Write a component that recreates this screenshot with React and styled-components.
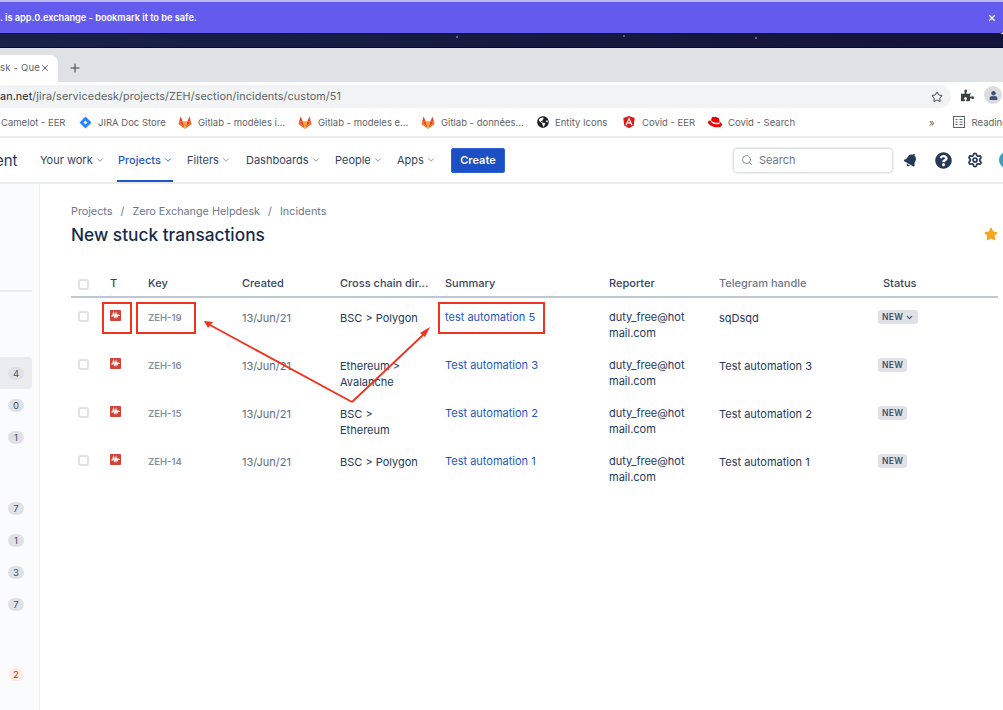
import React from 'react';
import styled, { createGlobalStyle } from 'styled-components';
import { FaBell, FaQuestionCircle, FaStar, FaPuzzlePiece, FaUser, FaGlobeAmericas, FaAngular, FaRedhat } from 'react-icons/fa';
import { ChevronDown, Search, Settings, Star, X, Plus } from 'lucide-react';

const GlobalStyle = createGlobalStyle`
  html, body {
    margin: 0;
    height: 710px;
    overflow: hidden;
    background: #fff;
  }
  body {
    font-family: Inter, "Noto Sans", sans-serif;
  }
`;

const Page = styled.div`
  position: relative;
  width: 1003px;
  height: 710px;
  overflow: hidden;
  display: flex;
  flex-direction: column;
`;

const Banner = styled.div`
  height: 34px;
  box-sizing: border-box;
  background: #635bee;
  border-top: 2px solid #bdb9f6;
  border-bottom: 1px solid #14152e;
  border-radius: 0 0 4px 0;
  display: flex;
  align-items: center;
  justify-content: space-between;
  padding: 0 6px 0 0;
  color: #fff;
  font-size: 9.2px;
  font-weight: 600;
`;

const Night = styled.div`
  position: relative;
  height: 14px;
  box-sizing: border-box;
  background: linear-gradient(90deg, #1a2149, #12133a);
  border-bottom: 1px solid #0b0b14;
`;

const StarDot = styled.i`
  position: absolute;
  top: ${(p) => p.$top}px;
  left: ${(p) => p.$left}px;
  width: 2px;
  height: 2px;
  background: #5d6379;
`;

const TabStrip = styled.div`
  height: 34px;
  box-sizing: border-box;
  background: #dee1e6;
  display: flex;
  align-items: flex-end;
  gap: 10px;
`;

const Tab = styled.div`
  width: 58px;
  height: 27px;
  background: #fff;
  border-radius: 0 8px 0 0;
  display: flex;
  align-items: center;
  justify-content: space-between;
  padding: 0 9px 2px 0;
  box-sizing: border-box;
  font-size: 9.5px;
  letter-spacing: 0.2px;
  color: #5f6368;
  white-space: nowrap;
  overflow: hidden;

  svg {
    flex: none;
  }
`;

const NewTab = styled.div`
  height: 27px;
  display: flex;
  align-items: center;
  color: #3c4043;
  padding-bottom: 2px;
  box-sizing: border-box;
`;

const AddressRow = styled.div`
  height: 26px;
  background: #fff;
  display: flex;
  align-items: flex-end;
`;

const AddressField = styled.div`
  width: 951px;
  height: 23px;
  background: #f1f3f4;
  border-radius: 0 12px 12px 0;
  display: flex;
  align-items: center;
  justify-content: space-between;
  padding-right: 8px;
  box-sizing: border-box;
  font-size: 10.8px;
  letter-spacing: 0.1px;
  color: #5f6368;
  white-space: nowrap;

  b {
    font-weight: 400;
    color: #202124;
  }
`;

const Puzzle = styled.span`
  display: flex;
  align-self: center;
  margin-left: 10px;
  color: #3c4043;
`;

const ProfileDot = styled.span`
  width: 18px;
  height: 18px;
  border-radius: 50%;
  background: #dadce0;
  align-self: center;
  margin-left: 10px;
  display: flex;
  align-items: center;
  justify-content: center;
  color: #3f5273;
`;

const Bookmarks = styled.div`
  height: 28px;
  box-sizing: border-box;
  background: #fff;
  display: flex;
  align-items: center;
  padding-left: 1px;
  font-size: 9.5px;
  color: #5f6368;
  white-space: nowrap;
`;

const Bookmark = styled.span`
  display: flex;
  align-items: center;
  gap: 6px;
  flex: none;
  width: ${(p) => p.$width}px;
`;

const BookmarkEnd = styled.span`
  display: flex;
  align-items: center;
  gap: 7px;
  flex: none;
`;

const BookmarkSep = styled.span`
  width: 1px;
  height: 14px;
  background: #dadce0;
  margin: 0 9px 0 9px;
`;

const TopNav = styled.header`
  height: 48px;
  box-sizing: border-box;
  border-top: 2px solid #ececf0;
  border-bottom: 2px solid #ebecf0;
  background: #fff;
  display: flex;
  align-items: stretch;
  font-size: 11px;
  color: #344563;
  white-space: nowrap;
`;

const ProductName = styled.div`
  width: 40px;
  font-size: 15px;
  text-indent: -5px;
  color: #253858;
  display: flex;
  align-items: center;
`;

const NavItem = styled.div`
  width: ${(p) => p.$width}px;
  display: flex;
  align-items: center;
  gap: 2px;
  position: relative;
  color: ${(p) => (p.$active ? '#1f55c7' : '#344563')};
  font-weight: ${(p) => (p.$active ? 500 : 400)};

  ${(p) =>
    p.$active &&
    `&::after {
      content: '';
      position: absolute;
      left: -1px;
      width: 56px;
      bottom: 0;
      height: 2px;
      background: #1f55c7;
    }`}
`;

const CreateButton = styled.div`
  width: 54px;
  height: 25px;
  align-self: center;
  box-sizing: border-box;
  background: #1c4fc3;
  border: 1px solid #2e62d6;
  border-radius: 2px;
  color: #fff;
  font-weight: 600;
  display: flex;
  align-items: center;
  justify-content: center;
`;

const NavRight = styled.div`
  margin-left: auto;
  display: flex;
  align-items: center;
  color: #253858;
`;

const SearchBox = styled.div`
  width: 160px;
  height: 25px;
  box-sizing: border-box;
  border: 1px solid #dfe1e6;
  box-shadow: 0 0 0 0.5px #dfe1e6;
  border-radius: 4px;
  display: flex;
  align-items: center;
  gap: 6px;
  padding-left: 7px;
  margin-right: 2px;
  font-size: 11px;
  color: #6b778c;
`;

const NavIcon = styled.span`
  width: 32px;
  display: flex;
  justify-content: center;
  align-items: center;
  transform: ${(p) => p.$turn || 'none'};
`;

const Avatar = styled.span`
  width: 16px;
  height: 16px;
  flex: none;
  border-radius: 50%;
  background: #35a2c4;
  margin-right: -12px;
  margin-left: 8px;
`;

const Body = styled.div`
  flex: 1;
  display: flex;
  min-height: 0;
`;

const Sidebar = styled.aside`
  width: 40px;
  box-sizing: border-box;
  background: #fafbfc;
  border-right: 1px solid #eceef1;
  padding-top: 106px;
`;

const SideRule = styled.div`
  width: 32px;
  height: 2px;
  background: #ebecf0;
  margin-bottom: 65px;
`;

const SideGroup = styled.div`
  margin-bottom: ${(p) => p.$gap}px;
`;

const SideRow = styled.div`
  width: 32px;
  height: 32px;
  display: flex;
  align-items: center;
  justify-content: flex-end;
  padding-right: 8px;
  box-sizing: border-box;
  border-radius: 0 3px 3px 0;
  background: ${(p) => (p.$active ? '#ebecf0' : 'transparent')};
`;

const Count = styled.span`
  width: 16px;
  height: 13px;
  border-radius: 7px;
  background: ${(p) => (p.$alert ? '#ffebe6' : '#dfe1e6')};
  color: ${(p) => (p.$alert ? '#bf2600' : '#42526e')};
  font-size: 9.5px;
  display: flex;
  align-items: center;
  justify-content: center;
`;

const Main = styled.main`
  flex: 1;
  padding: 21px 5px 0 31px;
  min-width: 0;
`;

const Breadcrumbs = styled.nav`
  display: flex;
  gap: 8px;
  font-size: 10.8px;
  line-height: 14px;
  color: #6b778c;
`;

const TitleRow = styled.div`
  display: flex;
  align-items: center;
  justify-content: space-between;
  margin-top: 1px;
  height: 28px;
`;

const Title = styled.h1`
  margin: 0;
  font-size: 17.3px;
  font-weight: 500;
  color: #172b4d;
`;

const Favourite = styled.span`
  display: flex;
  color: #f6a623;
`;

const Columns = `
  display: grid;
  grid-template-columns: 32px 38px 94px 98px 105px 164px 110px 159px 1fr;
`;

const HeadRow = styled.div`
  ${Columns}
  margin-top: 24px;
  height: 26px;
  box-sizing: border-box;
  border-bottom: 2px solid #c1c7d0;
  font-size: 11px;
  align-items: center;
  padding-bottom: 2px;
`;

const HeadCell = styled.div`
  padding-left: ${(p) => p.$indent || 7}px;
  color: ${(p) => (p.$muted ? '#6b778c' : '#344563')};
  white-space: nowrap;
  font-weight: 500;
`;

const Row = styled.div`
  ${Columns}
  height: 48px;
  box-sizing: border-box;
  padding-top: 11px;
  font-size: 11px;
  line-height: 16px;
  color: #253858;
`;

const Cell = styled.div`
  padding-left: 7px;
  padding-right: ${(p) => p.$right || 0}px;
  padding-top: ${(p) => p.$drop || 0}px;
  min-width: 0;
`;

const MailCell = styled(Cell)`
  word-break: break-all;
  padding-right: 24px;
`;

const Checkbox = styled.span`
  display: block;
  width: 11px;
  height: 11px;
  box-sizing: border-box;
  border: 2px solid #dfe1e6;
  border-radius: 3px;
  margin-top: 2px;
`;

const IssueIcon = styled.svg`
  display: block;
  width: 11px;
  height: 11px;
  margin-top: 1px;
`;

const KeyLink = styled.span`
  font-size: 9.5px;
  font-weight: 600;
  color: #848fa3;
`;

const DateText = styled.span`
  color: #5e6c84;
`;

const SummaryLink = styled.a`
  color: #1f55c7;
`;

const StatusBadge = styled.span`
  display: inline-flex;
  align-items: center;
  gap: 2px;
  height: 14px;
  padding: 0 4px;
  border-radius: 3px;
  background: #dfe1e6;
  color: #42526e;
  font-size: 8.5px;
  font-weight: 600;
  letter-spacing: 0.3px;
  margin-top: 1px;
  vertical-align: top;
`;

const Annotations = styled.svg`
  position: absolute;
  top: 0;
  left: 0;
  pointer-events: none;
`;

const GitlabIcon = () => (
  <svg width="14" height="13" viewBox="0 0 14 13">
    <polygon points="7,13 0.4,8 1.2,5.3" fill="#fc6d26" />
    <polygon points="7,13 13.6,8 12.8,5.3" fill="#fc6d26" />
    <polygon points="7,13 1.2,5.3 4.6,5.3" fill="#e24329" />
    <polygon points="7,13 12.8,5.3 9.4,5.3" fill="#e24329" />
    <polygon points="7,13 4.6,5.3 9.4,5.3" fill="#fca326" />
    <polygon points="1.2,5.3 2.6,0.6 4.6,5.3" fill="#e24329" />
    <polygon points="12.8,5.3 11.4,0.6 9.4,5.3" fill="#e24329" />
  </svg>
);

const JiraIcon = () => (
  <svg width="13" height="13" viewBox="0 0 13 13">
    <polygon points="6.5,0.5 12.5,6.5 6.5,12.5 0.5,6.5" fill="#2684ff" />
    <polygon points="6.5,4.5 8.5,6.5 6.5,8.5 4.5,6.5" fill="#fff" />
  </svg>
);

const ReaderIcon = () => (
  <svg width="12" height="12" viewBox="0 0 12 12" fill="none" stroke="#5f6368">
    <rect x="0.5" y="0.5" width="11" height="11" />
    <path d="M2.5 3.5h2M2.5 6h2M2.5 8.5h2M6.5 3.5h3M6.5 6h3M6.5 8.5h3" />
  </svg>
);

const IncidentIcon = () => (
  <IssueIcon viewBox="0 0 11 11">
    <rect width="11" height="11" rx="1" fill="#d04437" />
    <polyline points="1.2,6 2.6,6 3.6,3 4.8,8 6,3.5 7,7 7.8,5 9.8,5.5" fill="none" stroke="#fff" strokeWidth="1.2" />
  </IssueIcon>
);

const navItems = [
  { label: 'Your work', width: 78 },
  { label: 'Projects', width: 69, active: true },
  { label: 'Filters', width: 59 },
  { label: 'Dashboards', width: 89 },
  { label: 'People', width: 62 },
  { label: 'Apps', width: 54 },
];

const rows = [
  { id: 'ZEH-19', cross: 'BSC > Polygon', summary: 'test automation 5', handle: 'sqDsqd', open: true },
  { id: 'ZEH-16', cross: 'Ethereum > Avalanche', summary: 'Test automation 3', handle: 'Test automation 3' },
  { id: 'ZEH-15', cross: 'BSC > Ethereum', summary: 'Test automation 2', handle: 'Test automation 2' },
  { id: 'ZEH-14', cross: 'BSC > Polygon', summary: 'Test automation 1', handle: 'Test automation 1' },
];

const Arrow = ({ x, y, points }) => (
  <g>
    <line x1="352" y1="402" x2={x} y2={y} stroke="#f0321e" strokeWidth="1.8" />
    <polygon points={points} fill="#f0321e" />
  </g>
);

export default function App() {
  return (
    <Page>
      <GlobalStyle />
      <Banner>
        <span>. is app.0.exchange - bookmark it to be safe.</span>
        <X size={10} strokeWidth={3} />
      </Banner>
      <Night>
        <StarDot $left={456} $top={2} />
        <StarDot $left={623} $top={1} />
        <StarDot $left={755} $top={3} />
      </Night>
      <TabStrip>
        <Tab>
          <span>sk - Que</span>
          <X size={10} strokeWidth={2} color="#3c4043" />
        </Tab>
        <NewTab>
          <Plus size={14} strokeWidth={1.8} />
        </NewTab>
      </TabStrip>
      <AddressRow>
        <AddressField>
          <span>
            <b>an.net</b>/jira/servicedesk/projects/ZEH/section/incidents/custom/51
          </span>
          <Star size={12} strokeWidth={2} color="#3c4043" />
        </AddressField>
        <Puzzle>
          <FaPuzzlePiece size={13} />
        </Puzzle>
        <ProfileDot>
          <FaUser size={9} />
        </ProfileDot>
      </AddressRow>
      <Bookmarks>
        <Bookmark $width={78}>Camelot - EER</Bookmark>
        <Bookmark $width={99}>
          <JiraIcon />
          JIRA Doc Store
        </Bookmark>
        <Bookmark $width={120}>
          <GitlabIcon />
          Gitlab - modèles i...
        </Bookmark>
        <Bookmark $width={123}>
          <GitlabIcon />
          Gitlab - modeles e...
        </Bookmark>
        <Bookmark $width={116}>
          <GitlabIcon />
          Gitlab - données...
        </Bookmark>
        <Bookmark $width={85}>
          <FaGlobeAmericas size={12} color="#202124" />
          Entity Icons
        </Bookmark>
        <Bookmark $width={86}>
          <FaAngular size={14} color="#dd1b16" />
          Covid - EER
        </Bookmark>
        <Bookmark $width={221}>
          <FaRedhat size={14} color="#e00" />
          Covid - Search
        </Bookmark>
        <BookmarkEnd>»</BookmarkEnd>
        <BookmarkSep />
        <BookmarkEnd>
          <ReaderIcon />
          Reading
        </BookmarkEnd>
      </Bookmarks>
      <TopNav>
        <ProductName>ent</ProductName>
        {navItems.map((item) => (
          <NavItem key={item.label} $width={item.width} $active={item.active}>
            {item.label}
            <ChevronDown size={10} strokeWidth={2} color={item.active ? '#1f55c7' : '#7a869a'} />
          </NavItem>
        ))}
        <CreateButton>Create</CreateButton>
        <NavRight>
          <SearchBox>
            <Search size={12} strokeWidth={1.6} />
            Search
          </SearchBox>
          <NavIcon $turn="rotate(30deg)">
            <FaBell size={14} />
          </NavIcon>
          <NavIcon>
            <FaQuestionCircle size={17} />
          </NavIcon>
          <NavIcon>
            <Settings size={16} strokeWidth={2.6} />
          </NavIcon>
          <Avatar />
        </NavRight>
      </TopNav>
      <Body>
        <Sidebar>
          <SideRule />
          <SideGroup $gap={39}>
            <SideRow $active><Count>4</Count></SideRow>
            <SideRow><Count>0</Count></SideRow>
            <SideRow><Count>1</Count></SideRow>
          </SideGroup>
          <SideGroup $gap={38}>
            <SideRow><Count>7</Count></SideRow>
            <SideRow><Count>1</Count></SideRow>
            <SideRow><Count>3</Count></SideRow>
            <SideRow><Count>7</Count></SideRow>
          </SideGroup>
          <SideGroup $gap={0}>
            <SideRow><Count $alert>2</Count></SideRow>
          </SideGroup>
        </Sidebar>
        <Main>
          <Breadcrumbs>
            <span>Projects</span>
            <span>/</span>
            <span>Zero Exchange Helpdesk</span>
            <span>/</span>
            <span>Incidents</span>
          </Breadcrumbs>
          <TitleRow>
            <Title>New stuck transactions</Title>
            <Favourite>
              <FaStar size={14} />
            </Favourite>
          </TitleRow>
          <HeadRow>
            <HeadCell><Checkbox /></HeadCell>
            <HeadCell>T</HeadCell>
            <HeadCell>Key</HeadCell>
            <HeadCell>Created</HeadCell>
            <HeadCell>Cross chain dir...</HeadCell>
            <HeadCell>Summary</HeadCell>
            <HeadCell>Reporter</HeadCell>
            <HeadCell $muted>Telegram handle</HeadCell>
            <HeadCell $indent={12}>Status</HeadCell>
          </HeadRow>
          {rows.map((row) => (
            <Row key={row.id}>
              <Cell><Checkbox /></Cell>
              <Cell><IncidentIcon /></Cell>
              <Cell><KeyLink>{row.id}</KeyLink></Cell>
              <Cell $drop={1}><DateText>13/Jun/21</DateText></Cell>
              <Cell $drop={1} $right={14}>{row.cross}</Cell>
              <Cell><SummaryLink>{row.summary}</SummaryLink></Cell>
              <MailCell>duty_free@hotmail.com</MailCell>
              <Cell $drop={1}>{row.handle}</Cell>
              <Cell>
                <StatusBadge>
                  NEW
                  {row.open && <ChevronDown size={9} strokeWidth={3} />}
                </StatusBadge>
              </Cell>
            </Row>
          ))}
        </Main>
      </Body>
      <Annotations width="1003" height="710" fill="none">
        <rect x="103" y="303" width="28" height="30" stroke="#f0321e" strokeWidth="2" />
        <rect x="137" y="303" width="58" height="30" stroke="#f0321e" strokeWidth="2" />
        <rect x="439" y="303" width="105" height="30" stroke="#f0321e" strokeWidth="2" />
        <Arrow x={210} y={325} points="204,321 213,322 208,328" />
        <Arrow x={423} y={335} points="430,327 420,333 425,337" />
      </Annotations>
    </Page>
  );
}
